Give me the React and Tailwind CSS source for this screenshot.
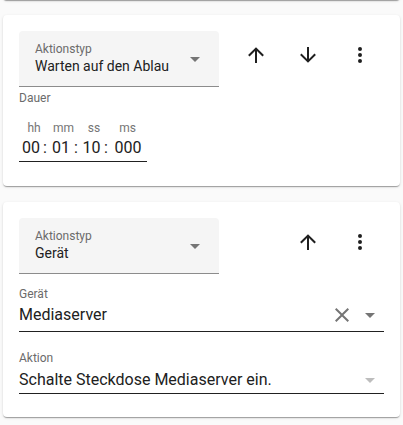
import React from "react";

const SHADOW =
  "shadow-[0_2px_1px_-1px_rgba(0,0,0,0.2),0_1px_1px_0_rgba(0,0,0,0.14),0_1px_3px_0_rgba(0,0,0,0.12)]";

function Icon({ d, className = "" }) {
  return (
    <svg viewBox="0 0 24 24" width="24" height="24" className={className}>
      <path d={d} fill="currentColor" />
    </svg>
  );
}

const UP = "M13,20H11V8L5.5,13.5L4.08,12.08L12,4.16L19.92,12.08L18.5,13.5L13,8V20Z";
const DOWN = "M11,4H13V16L18.5,10.5L19.92,11.92L12,19.84L4.08,11.92L5.5,10.5L11,16V4Z";
const DOTS =
  "M12,16A2,2 0 0,1 14,18A2,2 0 0,1 12,20A2,2 0 0,1 10,18A2,2 0 0,1 12,16M12,10A2,2 0 0,1 14,12A2,2 0 0,1 12,14A2,2 0 0,1 10,12A2,2 0 0,1 12,10M12,4A2,2 0 0,1 14,6A2,2 0 0,1 12,8A2,2 0 0,1 10,6A2,2 0 0,1 12,4Z";
const CLOSE =
  "M19,6.41L17.59,5L12,10.59L6.41,5L5,6.41L10.59,12L5,17.59L6.41,19L12,13.41L17.59,19L19,17.59L13.41,12L19,6.41Z";

function Caret({ className = "" }) {
  return (
    <svg width="10" height="5" viewBox="0 0 10 5" className={className}>
      <polygon points="0,0 10,0 5,5" fill="currentColor" />
    </svg>
  );
}

function Btn({ d }) {
  return (
    <div className="w-12 h-12 flex items-center justify-center text-[#1f1f1f]">
      <Icon d={d} />
    </div>
  );
}

function TypeSelect({ value }) {
  return (
    <div className="relative w-[200px] h-[56px] shrink-0 bg-[#f5f5f5] rounded-t-[4px] border-b border-[#8c8c8c]">
      <div className="absolute left-4 top-[10px] text-[12px] leading-4 text-[#6b6b6b]">
        Aktionstyp
      </div>
      <div className="absolute left-4 top-[23px] w-[140px] overflow-hidden whitespace-nowrap text-[14px] leading-6 text-[#212121]">
        {value}
      </div>
      <Caret className="absolute left-[171px] top-[26px] text-[#757575]" />
    </div>
  );
}

export default function App() {
  return (
    <div
      className="min-h-[425px] bg-[#fafafa] px-[3px] flex flex-col"
      style={{ fontFamily: "Roboto, 'Noto Sans', sans-serif" }}
    >
      <div className={`-mt-[4px] h-[4px] bg-white rounded-b-[4px] ${SHADOW}`} />

      {/* Card 1 */}
      <div className={`mt-[15px] bg-white rounded-[4px] px-4 pt-4 pb-6 ${SHADOW}`}>
        <div className="flex items-start">
          <TypeSelect value="Warten auf den Ablau" />
          <div className="ml-auto flex gap-1">
            <Btn d={UP} />
            <Btn d={DOWN} />
            <Btn d={DOTS} />
          </div>
        </div>
        <div className="mt-[3px] text-[12px] leading-4 text-[#6b6b6b]">Dauer</div>
        <div className="mt-[14px] w-[128px] border-b border-[#212121] pb-px">
          <div className="flex text-[12px] leading-4 text-[#757575]">
            <span className="ml-[3px] w-6 text-center">hh</span>
            <span className="ml-[5.5px] w-6 text-center">mm</span>
            <span className="ml-[6.5px] w-6 text-center">ss</span>
            <span className="ml-[9.5px] w-6 text-center">ms</span>
          </div>
          <div className="flex text-[16px] leading-6 text-[#212121]">
            <span className="w-6 text-center">00</span>
            <span className="w-1 text-center">:</span>
            <span className="ml-[2px] w-6 text-center">01</span>
            <span className="ml-px w-1 text-center">:</span>
            <span className="ml-[1.5px] w-6 text-center">10</span>
            <span className="ml-[0.5px] w-1 text-center">:</span>
            <span className="ml-[6px] w-7 text-center">000</span>
          </div>
        </div>
      </div>

      {/* Card 2 */}
      <div className={`mt-4 bg-white rounded-[4px] px-4 pt-4 pb-[23px] ${SHADOW}`}>
        <div className="flex items-start">
          <TypeSelect value="Gerät" />
          <div className="ml-auto flex gap-1">
            <Btn d={UP} />
            <Btn d={DOTS} />
          </div>
        </div>

        <div className="mt-3 text-[12px] leading-4 text-[#6b6b6b]">Gerät</div>
        <div className="mt-px pb-1 border-b border-[#212121] flex items-center">
          <span className="text-[16px] leading-6 text-[#212121]">Mediaserver</span>
          <div className="ml-auto flex items-center">
            <Icon d={CLOSE} className="text-[#757575]" />
            <div className="ml-1 mr-[2px] w-6 h-6 flex items-center justify-center">
              <Caret className="text-[#757575]" />
            </div>
          </div>
        </div>

        <div className="mt-[18px] text-[12px] leading-4 text-[#6b6b6b]">Aktion</div>
        <div className="mt-[2px] pb-px border-b border-[#212121] flex items-center">
          <span className="text-[16px] leading-6 text-[#212121]">
            Schalte Steckdose Mediaserver ein.
          </span>
          <div className="ml-auto mr-[2px] w-6 h-6 flex items-center justify-center">
            <Caret className="text-[#bdbdbd]" />
          </div>
        </div>
      </div>
    </div>
  );
}
